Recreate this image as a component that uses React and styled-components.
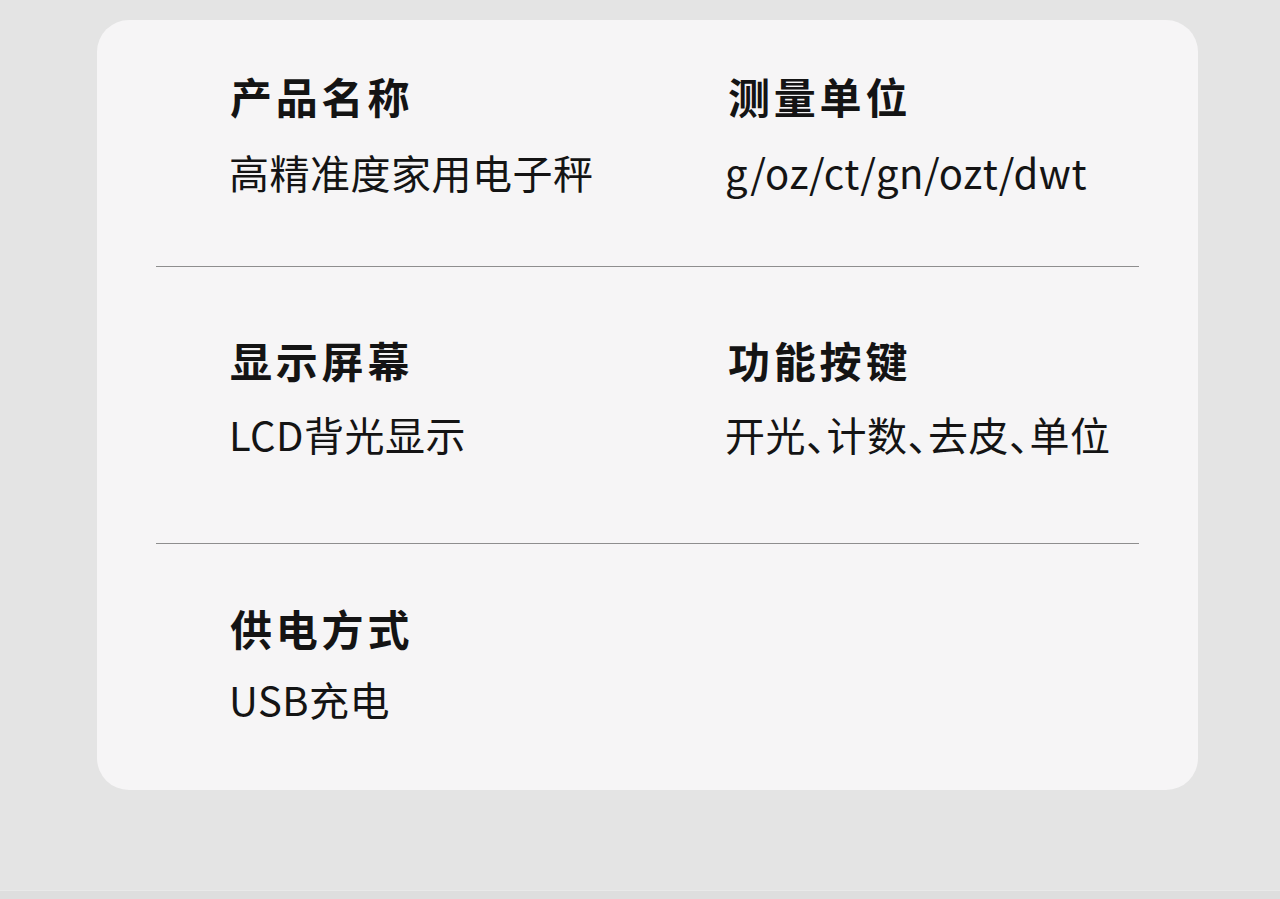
import React from "react";
import styled, { createGlobalStyle } from "styled-components";

const Global = createGlobalStyle`
  html, body { margin: 0; padding: 0; background: #e4e4e4; }
  body { font-family: "Noto Sans CJK SC", "Noto Sans", sans-serif; }
`;

const Page = styled.div`
  min-height: 899px;
  box-sizing: border-box;
  padding-top: 20px;
  display: flex;
  flex-direction: column;
`;

const Card = styled.div`
  margin-left: 97px;
  width: 1101px;
  height: 770px;
  box-sizing: border-box;
  background: #f6f5f6;
  border-radius: 32px;
  padding: 0 59px;
  display: flex;
  flex-direction: column;
`;

const Section = styled.div`
  display: grid;
  grid-template-columns: 498px 1fr;
  padding: ${(p) => p.$pt}px 0 ${(p) => p.$pb}px 73px;
  border-bottom: ${(p) => (p.$last ? "none" : "1px solid #8e8e8e")};
`;

const Item = styled.div`
  display: flex;
  flex-direction: column;
  gap: ${(p) => p.$gap}px;
`;

const Heading = styled.div`
  font-size: 42px;
  line-height: 50px;
  font-weight: 600;
  color: #141414;
  letter-spacing: 3.8px;
  white-space: nowrap;
  margin-left: 1px;
`;

const Value = styled.div`
  font-size: 40px;
  line-height: 50px;
  font-weight: 400;
  color: #141414;
  letter-spacing: 0.5px;
  white-space: nowrap;
  font-feature-settings: "halt";
  margin-left: ${(p) => p.$shift || 0}px;
`;

const Footer = styled.div`
  margin-top: auto;
  height: 8px;
  border-top: 1px solid #e9e9e9;
  background: #dedede;
`;

const rows = [
  {
    pt: 51,
    pb: 69,
    gap: 26,
    items: [
      ["产品名称", "高精准度家用电子秤"],
      ["测量单位", "g/oz/ct/gn/ozt/dwt"],
    ],
  },
  {
    pt: 68,
    pb: 84,
    gap: 24,
    items: [
      ["显示屏幕", "LCD背光显示"],
      ["功能按键", "开光、计数、去皮、单位"],
    ],
  },
  {
    pt: 59,
    pb: 65,
    gap: 21,
    last: true,
    items: [["供电方式", "USB充电"]],
  },
];

export default function App() {
  return (
    <>
      <Global />
      <Page>
        <Card>
          {rows.map((r, i) => (
            <Section key={i} $pt={r.pt} $pb={r.pb} $last={r.last}>
              {r.items.map(([h, v], j) => (
                <Item key={j} $gap={r.gap}>
                  <Heading>{h}</Heading>
                  <Value $shift={j === 1 ? -2 : 0}>{v}</Value>
                </Item>
              ))}
            </Section>
          ))}
        </Card>
        <Footer />
      </Page>
    </>
  );
}
